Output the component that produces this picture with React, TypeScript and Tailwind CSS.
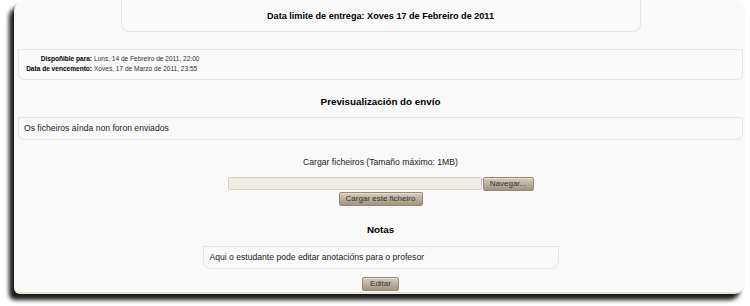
const btn =
  "h-[14px] px-[5px] rounded-[2px] border border-[#988a74] bg-gradient-to-b from-[#d6cdbd] to-[#a29480] text-[8px] leading-none text-[#333] shadow-[inset_0_1px_0_#e4ddd0]";

export default function App() {
  return (
    <div className="w-[750px] h-[306px] bg-white overflow-hidden font-['Liberation_Sans',Arial,sans-serif] text-[#111]">
      <div className="ml-[14px] mt-[3px] w-[731px] pl-1 pr-[2px] pb-[1px] bg-[#f9f9f9] rounded-tl-[12px] rounded-tr-[12px] rounded-bl-[6px] rounded-br-[10px] border-b-2 border-[#e9e3d2] shadow-[-5px_6px_4px_#1e1e1e]">
        {/* due date */}
        <div className="-mt-[3px] mx-auto w-[520px] h-[32px] pt-[3px] flex items-center justify-center border-x border-b border-[#e4e4e4] rounded-b-[8px]">
          <span className="text-[9.1px] font-bold text-black">Data limite de entrega: Xoves 17 de Febreiro de 2011</span>
        </div>

        {/* dates */}
        <div className="mt-[17px] h-[31px] border border-[#e4e4e4] rounded-b-[6px] pl-[6px] pt-[4px] text-[6.55px] leading-[10px]">
          <div className="grid grid-cols-[67px_auto] gap-x-[2px] w-fit">
            <span className="text-right font-bold text-black">Dispoñible para:</span>
            <span className="text-[#333]">Luns, 14 de Febreiro de 2011, 22:00</span>
            <span className="text-right font-bold text-black">Data de vencemento:</span>
            <span className="text-[#333]">Xoves, 17 de Marzo de 2011, 23:55</span>
          </div>
        </div>

        <h3 className="mt-[15px] h-[14px] leading-[14px] text-center text-[9.8px] font-bold text-black">Previsualización do envío</h3>

        <div className="mt-[8px] h-[23px] border border-[#e4e4e4] rounded-b-[6px] px-[5px] flex items-center text-[8.6px] text-[#222]">
          Os ficheiros aínda non foron enviados
        </div>

        {/* upload */}
        <p className="mt-[16px] h-[12px] leading-[12px] text-center text-[8.65px] text-[#222]">Cargar ficheiros (Tamaño máximo: 1MB)</p>
        <div className="mt-[9px] flex justify-center items-start gap-[1px]">
          <div className="w-[254px] h-[13px] rounded-[2px] border border-[#d5cec0] bg-[#f0ece4]" />
          <button className={`${btn} w-[51px]`}>Navegar...</button>
        </div>
        <div className="mt-[1px] flex justify-center">
          <button className={`${btn} w-[84px]`}>Cargar este ficheiro</button>
        </div>

        {/* notes */}
        <h3 className="mt-[17px] h-[14px] leading-[14px] text-center text-[9.8px] font-bold text-black">Notas</h3>
        <div className="mt-[9px] mx-auto w-[356px] h-[23px] border border-[#e4e4e4] rounded-b-[8px] px-[6px] flex items-center text-[8.6px] text-[#222]">
          Aqui o estudante pode editar anotacións para o profesor
        </div>
        <div className="mt-[8px] flex justify-center">
          <button className={`${btn} w-[37px]`}>Editar</button>
        </div>
      </div>
    </div>
  );
}
